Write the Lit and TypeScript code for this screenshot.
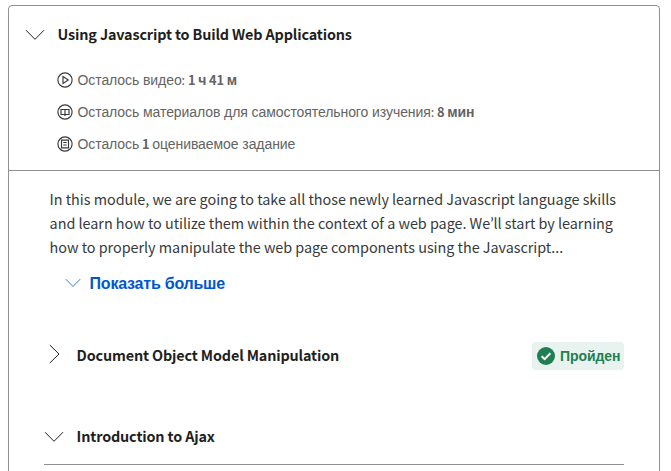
import { LitElement, html, svg, css } from "lit";
import { customElement, property } from "lit/decorators.js";

@customElement("line-chevron")
class LineChevron extends LitElement {
  @property() dir = "down";
  @property({ type: Number }) size = 20;
  static styles = css`
    :host { display: block; flex: none; line-height: 0; }
  `;
  render() {
    const d = this.dir === "right" ? "M5.8 1 L15 10 L5.8 19" : "M1 5.2 L10 14.3 L19 5.2";
    return html`<svg width=${this.size} height=${this.size} viewBox="0 0 20 20" fill="none" stroke="currentColor" stroke-width="1"><path d=${d} /></svg>`;
  }
}

const glyphs: Record<string, unknown> = {
  play: svg`<path d="M6 4.6 L11.3 8 L6 11.4 Z" />`,
  book: svg`<path d="M8 5.5 H4 V10.5 H7.1 L8 11.3 L8.9 10.5 H12 V5.5 Z M8 5.5 V11" />`,
  task: svg`<path d="M4.5 4.1 H11.5 V11.9 H4.5 Z M6.3 6.5 H9.7 M6.3 9 H9.7" />`,
};

@customElement("round-icon")
class RoundIcon extends LitElement {
  @property() name = "play";
  static styles = css`
    :host { display: block; flex: none; line-height: 0; color: #383838; }
  `;
  render() {
    return html`<svg width="16" height="16" viewBox="0 0 16 16" fill="none" stroke="currentColor" stroke-width="1.15"><circle cx="8" cy="8" r="7.1" />${glyphs[this.name]}</svg>`;
  }
}

@customElement("app-root")
class AppRoot extends LitElement {
  static styles = css`
    :host {
      display: block;
      box-sizing: border-box;
      height: 471px;
      overflow: hidden;
      padding: 5px 11px 0 8px;
      background: #fff;
      color: #1f1f1f;
      font-family: "Liberation Sans", sans-serif;
    }
    .card {
      box-sizing: border-box;
      height: 480px;
      border: 1px solid #8f8f96;
      border-radius: 4px;
    }
    .head { box-sizing: border-box; height: 165px; border-bottom: 1px solid #8f8f96; }
    .title-row { display: flex; align-items: center; height: 57px; padding-left: 16px; margin-bottom: 1px; }
    .latin { font-family: "Noto Sans CJK SC", sans-serif; font-size: 12.8px; }
    .title {
      margin-left: 12.6px;
      padding-bottom: 2px;
      font-family: "Noto Sans CJK SC", sans-serif;
      font-size: 14.4px;
      font-weight: 700;
      line-height: 24px;
      letter-spacing: -0.15px;
      white-space: nowrap;
    }
    .meta { display: flex; align-items: center; height: 32px; padding-left: 48px; gap: 4.5px; font-size: 14px; letter-spacing: -0.08px; color: #636363; white-space: nowrap; }
    .meta-text { padding-bottom: 2px; }
    .text {
      margin: 16px 0 0 40.6px;
      font-family: "Noto Sans CJK SC", sans-serif;
      font-size: 14.4px;
      line-height: 24px;
      letter-spacing: -0.03px;
      color: #373a3c;
      white-space: nowrap;
    }
    .apostrophe { font-family: Lato, sans-serif; font-size: 16px; line-height: 1; }
    .more { display: flex; align-items: center; height: 24px; margin: 12px 0 0 56px; gap: 8.6px; color: #0056d2; font-size: 16px; font-weight: 700; letter-spacing: -0.22px; }
    .more-text { padding-top: 1px; }
    .lesson { display: flex; align-items: center; height: 28px; margin: 47px 35px 0 35px; }
    .lesson + .lesson { margin-top: 53px; }
    .lesson .title { padding-bottom: 3px; }
    .closed { padding-bottom: 4px; }
    .badge {
      display: flex; align-items: center; box-sizing: border-box;
      width: 92px; height: 28px; margin-left: auto; padding-left: 5px; gap: 5px;
      border-radius: 4px; background: #e8f2ee; color: #1f7f53;
      font-size: 14px; font-weight: 700; letter-spacing: -0.08px; white-space: nowrap;
    }
    .rule { height: 1px; margin: 13px 35px 0; background: #8f8f96; }
  `;

  render() {
    return html`
      <div class="card">
        <div class="head">
          <div class="title-row">
            <line-chevron></line-chevron>
            <span class="title">Using Javascript to Build Web Applications</span>
          </div>
          <div class="meta"><round-icon name="play"></round-icon><span class="meta-text">Осталось видео<span class="latin">: </span><b><span class="latin">1 </span>ч<span class="latin"> 41 </span>м</b></span></div>
          <div class="meta"><round-icon name="book"></round-icon><span class="meta-text">Осталось материалов для самостоятельного изучения<span class="latin">: </span><b><span class="latin">8 </span>мин</b></span></div>
          <div class="meta"><round-icon name="task"></round-icon><span class="meta-text">Осталось<b class="latin"> 1 </b>оцениваемое задание</span></div>
        </div>
        <div class="text">
          <div>In this module, we are going to take all those newly learned Javascript language skills</div>
          <div>and learn how to utilize them within the context of a web page. We<span class="apostrophe">’</span>ll start by learning</div>
          <div>how to properly manipulate the web page components using the Javascript...</div>
        </div>
        <div class="more"><line-chevron size="16"></line-chevron><span class="more-text">Показать больше</span></div>
        <div class="lesson">
          <line-chevron class="closed" dir="right"></line-chevron>
          <span class="title">Document Object Model Manipulation</span>
          <span class="badge">
            <svg width="18" height="18" viewBox="0 0 18 18"><circle cx="9" cy="9" r="9" fill="#1f7f53" /><path d="M4.6 9.3 L7.6 12.1 L13.4 6.3" fill="none" stroke="#fff" stroke-width="2" /></svg>
            <span>Пройден</span>
          </span>
        </div>
        <div class="lesson">
          <line-chevron></line-chevron>
          <span class="title">Introduction to Ajax</span>
        </div>
        <div class="rule"></div>
      </div>
    `;
  }
}
